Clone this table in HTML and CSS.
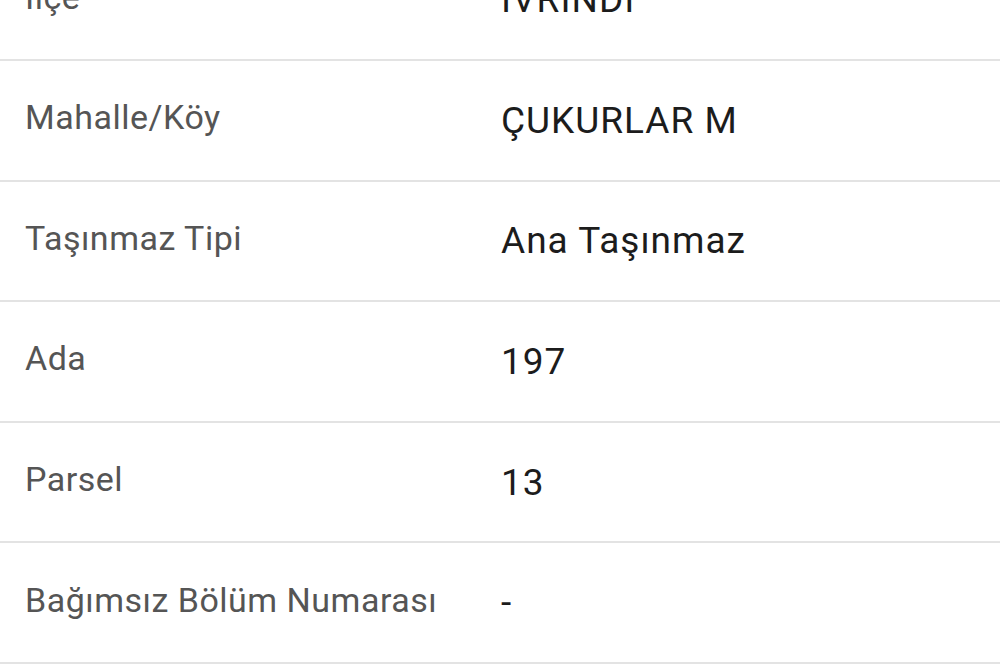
FILE: index.html
```html
<!DOCTYPE html>
<html lang="tr">
<head>
<meta charset="utf-8">
<link rel="stylesheet" href="styles.css">
</head>
<body>
<div class="list">
  <div class="row"><div class="label">İlçe</div><div class="value">İVRİNDİ</div></div>
  <div class="row"><div class="label">Mahalle/Köy</div><div class="value">ÇUKURLAR M</div></div>
  <div class="row"><div class="label">Taşınmaz Tipi</div><div class="value">Ana Taşınmaz</div></div>
  <div class="row"><div class="label">Ada</div><div class="value">197</div></div>
  <div class="row"><div class="label">Parsel</div><div class="value">13</div></div>
  <div class="row"><div class="label">Bağımsız Bölüm Numarası</div><div class="value">-</div></div>
</div>
</body>
</html>
```
FILE: styles.css
```css
html, body {
  margin: 0;
  padding: 0;
  background: #ffffff;
  overflow: hidden;
}
body {
  font-family: Roboto, "Noto Sans", sans-serif;
}
.list {
  margin-top: -59.6px;
}
.row {
  display: grid;
  grid-template-columns: 476px 1fr;
  align-items: center;
  height: 118.6px;
  padding-left: 25px;
  border-bottom: 2px solid #e3e3e3;
}
.label {
  font-size: 34px;
  letter-spacing: 0.5px;
  color: #555555;
  margin-top: -6px;
}
.value {
  font-size: 37px;
  letter-spacing: 1px;
  color: #1c1c1c;
}
```
